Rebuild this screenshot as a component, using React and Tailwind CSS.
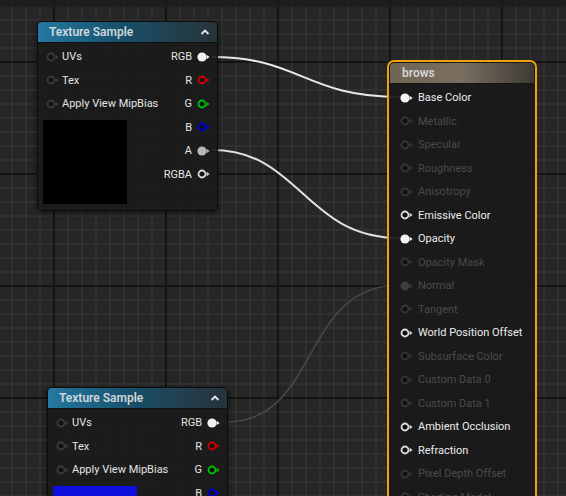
import React from 'react'

const FONT = { fontFamily: 'Roboto, "Open Sans", sans-serif' }

function Pin({ kind = 'ring', color = '#3a3a3a' }) {
  return (
    <svg width="13" height="10" viewBox="0 0 13 10" className="shrink-0">
      {kind === 'filled' ? (
        <circle cx="5" cy="5" r="4.6" fill={color} />
      ) : (
        <circle cx="5" cy="5" r="3.5" fill="#111" stroke={color} strokeWidth="1.8" />
      )}
      <path d="M9.6 2.8 L12.6 5 L9.6 7.2 Z" fill={color} />
    </svg>
  )
}

function Chevron() {
  return (
    <svg width="10" height="8" viewBox="0 0 10 8" className="shrink-0">
      <polyline points="1.5,6 5,2.5 8.5,6" fill="none" stroke="#e6e6e6" strokeWidth="1.8" />
    </svg>
  )
}

const TEX_INPUTS = ['UVs', 'Tex', 'Apply View MipBias']

function TextureSample({ pos, preview, outputs }) {
  return (
    <div className={`absolute ${pos} w-[181px] rounded-[5px] border border-[#0c0c0c] bg-[#1a1b1a]/[0.93] shadow-[0_2px_6px_rgba(0,0,0,0.5)]`}>
      <div className="h-[21px] rounded-t-[4px] bg-gradient-to-r from-[#2479a2] via-[#174d66] to-[#26333a] flex items-center justify-between pl-[11px] pr-[7px] border-b border-[#0e1214]">
        <span className="text-[12px] font-semibold text-[#cfd6da] leading-none">Texture Sample</span>
        <Chevron />
      </div>
      <div className="flex justify-between pt-[2px]">
        <div className="flex flex-col">
          {TEX_INPUTS.map(l => (
            <div key={l} className="h-[23.5px] flex items-center gap-[3px] pl-[8px]">
              <Pin color="#3b3b3b" />
              <span className="text-[11px] text-[#e4e4e4] leading-none">{l}</span>
            </div>
          ))}
          <div className={`ml-[5px] mt-[4px] w-[84px] h-[84px] ${preview}`} />
        </div>
        <div className="flex flex-col items-end">
          {outputs.map(o => (
            <div key={o.label} className="h-[23.5px] flex items-center gap-[5px] pr-[7px]">
              <span className="text-[11px] text-[#e4e4e4] leading-none">{o.label}</span>
              <Pin kind={o.kind} color={o.color} />
            </div>
          ))}
        </div>
      </div>
      <div className="h-[6px]" />
    </div>
  )
}

const OUT_TOP = [
  { label: 'RGB', kind: 'filled', color: '#f2f2f2' },
  { label: 'R', kind: 'ring', color: '#d40000' },
  { label: 'G', kind: 'ring', color: '#00c000' },
  { label: 'B', kind: 'ring', color: '#0000d8' },
  { label: 'A', kind: 'filled', color: '#b8b8b8' },
  { label: 'RGBA', kind: 'ring', color: '#d8d8d8' },
]

const OUT_BOTTOM = [
  { label: 'RGB', kind: 'filled', color: '#f2f2f2' },
  { label: 'R', kind: 'ring', color: '#d40000' },
  { label: 'G', kind: 'ring', color: '#00c000' },
  { label: 'B', kind: 'ring', color: '#0000d8' },
  { label: 'A', kind: 'ring', color: '#d8d8d8' },
  { label: 'RGBA', kind: 'ring', color: '#d8d8d8' },
]

// on: label lit, pin: ring | filled | off | linkedOff
const BROWS = [
  ['Base Color', 'filled'],
  ['Metallic', 'off'],
  ['Specular', 'off'],
  ['Roughness', 'off'],
  ['Anisotropy', 'off'],
  ['Emissive Color', 'ring'],
  ['Opacity', 'filled'],
  ['Opacity Mask', 'off'],
  ['Normal', 'linkedOff'],
  ['Tangent', 'off'],
  ['World Position Offset', 'ring'],
  ['Subsurface Color', 'off'],
  ['Custom Data 0', 'off'],
  ['Custom Data 1', 'off'],
  ['Ambient Occlusion', 'ring'],
  ['Refraction', 'ring'],
  ['Pixel Depth Offset', 'off'],
  ['Shading Model', 'off'],
]

function BrowsNode() {
  return (
    <div className="absolute left-[387px] top-[60px] w-[150px] h-[460px] rounded-[7px] border-[2px] border-[#eea20c] bg-[#191a19]/[0.94] p-[1px]">
      <div className="h-[21px] rounded-t-[4px] bg-gradient-to-r from-[#6f6555] via-[#7a6f60] to-[#3d3a36] flex items-center pl-[12px] border-b border-[#151412]">
        <span className="text-[12px] font-semibold text-[#d6d6d6] leading-none">brows</span>
      </div>
      <div className="flex flex-col pt-[2px]">
        {BROWS.map(([label, pin]) => {
          const lit = pin === 'filled' || pin === 'ring'
          return (
            <div key={label} className="h-[23.5px] flex items-center gap-[5px] pl-[10px]">
              {pin === 'filled' && <Pin kind="filled" color="#f4f4f4" />}
              {pin === 'ring' && <Pin kind="ring" color="#dcdcdc" />}
              {pin === 'off' && <Pin kind="ring" color="#363636" />}
              {pin === 'linkedOff' && <Pin kind="filled" color="#3c3c3c" />}
              <span className={`text-[11px] leading-none ${lit ? 'text-[#ececec]' : 'text-[#4a4a4a]'}`}>{label}</span>
            </div>
          )
        })}
      </div>
    </div>
  )
}

export default function App() {
  return (
    <div
      className="relative w-[566px] h-[496px] overflow-hidden bg-[#262626] [background-image:linear-gradient(90deg,#141414_2px,transparent_2px),linear-gradient(#141414_2px,transparent_2px),linear-gradient(90deg,#303030_2px,transparent_2px),linear-gradient(#303030_2px,transparent_2px)] [background-size:112px_112px,112px_112px,14px_14px,14px_14px] [background-position:53px_61px,53px_61px,11px_5px,11px_5px]"
      style={FONT}
    >
      <div className="absolute left-0 top-0 w-full h-[7px] bg-[#1b1b1b]/80" />

      <svg className="absolute left-0 top-0" width="566" height="496">
        <path d="M212 57 C300 57, 305 97, 400 97" fill="none" stroke="#e8e8e8" strokeWidth="2" />
        <path d="M212 150 C300 150, 305 238, 400 238" fill="none" stroke="#e0e0e0" strokeWidth="2" />
        <path d="M226 422 C320 422, 300 285, 400 285" fill="none" stroke="#474747" strokeWidth="1.6" />
      </svg>

      <TextureSample pos="left-[37px] top-[21px]" preview="bg-black" outputs={OUT_TOP} />
      <TextureSample pos="left-[47px] top-[387px]" preview="bg-[#0d0ddc]" outputs={OUT_BOTTOM} />
      <BrowsNode />
    </div>
  )
}
